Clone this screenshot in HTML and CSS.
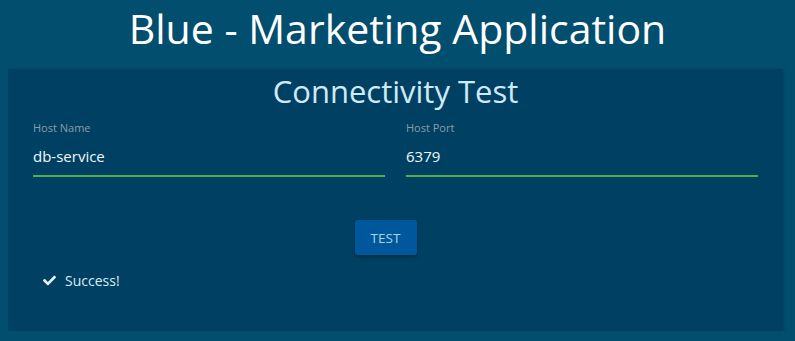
FILE: index.html
```html
<!DOCTYPE html>
<html lang="en">
<head>
    <meta charset="UTF-8" />
    <meta name="viewport" content="width=device-width, initial-scale=1.0" />
    <title>Blue - Marketing Application</title>
    <link rel="stylesheet" href="styles.css">
</head>
<body>

<h1 id="app-title">Blue - Marketing Application</h1>

<div id="card">
    <h2 class="card-title">Connectivity Test</h2>
    <div class="fields">
        <div class="field">
            <label for="host-name">Host Name</label>
            <input id="host-name" type="text" value="db-service" />
        </div>
        <div class="field">
            <label for="host-port">Host Port</label>
            <input id="host-port" type="text" value="6379" />
        </div>
    </div>
    <div class="actions">
        <button id="test-btn">Test</button>
    </div>
    <div class="result">
        <svg class="check" viewBox="0 0 512 512" width="13" height="13">
            <path d="M173.9 439.4l-166.4-166.4c-10-10-10-26.2 0-36.2l36.2-36.2c10-10 26.2-10 36.2 0L192 312.7 432.1 72.6c10-10 26.2-10 36.2 0l36.2 36.2c10 10 10 26.2 0 36.2l-294.4 294.4c-10 10-26.2 10-36.2 0z" fill="#e3f2fb"/>
        </svg>
        <span>Success!</span>
    </div>
</div>

</body>
</html>
```

FILE: styles.css
```css
* { box-sizing: border-box; }
body {
    margin: 8px;
    font-family: 'Open Sans', sans-serif;
    background-color: #024e6e;
    color: #fff;
}
#app-title {
    margin: 0;
    height: 61px;
    text-align: center;
    font-weight: normal;
    font-size: 41px;
    line-height: 40px;
    color: #fff;
}
#card {
    width: 775px;
    height: 262px;
    background: #004062;
    border-radius: 2px;
    box-shadow: 0 2px 4px rgba(0,0,0,0.25);
    padding: 4px 25px 0;
}
.card-title {
    margin: 0;
    text-align: center;
    font-weight: normal;
    font-size: 31px;
    line-height: 36px;
    color: #cfe9f8;
}
.fields {
    display: flex;
    gap: 21px;
    margin-top: 12px;
}
.field {
    flex: 1;
    display: flex;
    flex-direction: column;
}
.field label {
    font-size: 11px;
    line-height: 14px;
    color: #8a9eab;
}
.field input {
    margin-top: 8px;
    padding: 3px 0 9px;
    background: transparent;
    border: none;
    border-bottom: 2px solid #4caf50;
    color: #eef7fc;
    font-family: inherit;
    font-size: 15px;
    line-height: 20px;
    outline: none;
}
.actions {
    display: flex;
    justify-content: center;
    margin-top: 43px;
    padding-right: 20px;
}
#test-btn {
    width: 62px;
    height: 35px;
    background: #01579b;
    border: none;
    border-radius: 2px;
    box-shadow: 0 2px 3px rgba(0,0,0,0.3);
    color: #a9d4e6;
    font-family: inherit;
    font-size: 13.5px;
    text-transform: uppercase;
    cursor: pointer;
}
.result {
    display: flex;
    align-items: center;
    gap: 9px;
    margin-top: 16px;
    padding-left: 10px;
    font-size: 14px;
    color: #d6ecf8;
}
```
